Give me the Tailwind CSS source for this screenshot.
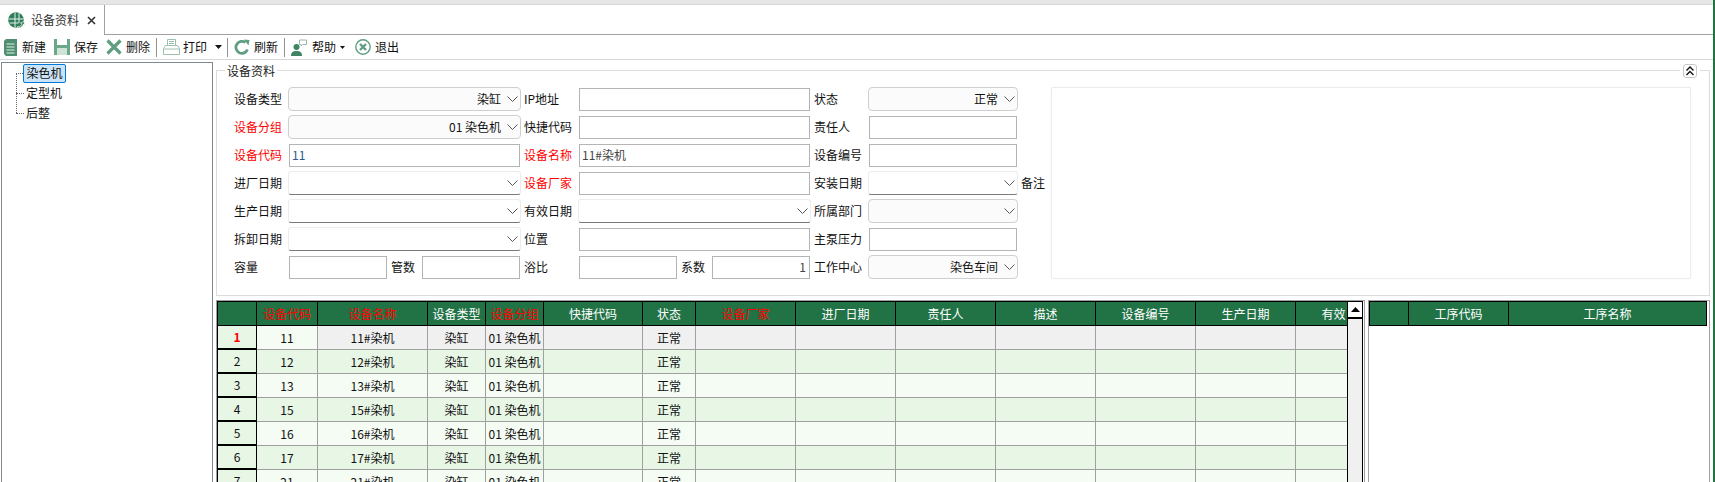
<!DOCTYPE html>
<html lang="zh-CN">
<head>
  <meta charset="UTF-8">
  <title>设备资料</title>
  <script src="https://cdn.jsdelivr.net/npm/@tailwindcss/browser@4"></script>
</head>
<body class="h-[482px] overflow-hidden bg-white text-[12px] leading-none text-[#111] font-['Noto_Sans_CJK_SC',sans-serif]">
<div class="relative h-[482px] w-[1715px] overflow-hidden">

  <!-- right window edge -->
  <div class="absolute right-0 top-0 h-full w-[2px] bg-[#217346]"></div>

  <!-- top strip -->
  <div class="h-[4px] bg-[#e6e6e6]"></div>

  <!-- tab bar -->
  <div class="flex h-[31px] border-t border-b border-t-[#d8d8d8] border-b-[#a0a0a0]">
    <div class="-mb-px flex w-[105px] items-center border-r border-[#a0a0a0] bg-white pl-[8px]">
      <svg class="h-[17px] w-[17px]" viewBox="0 0 17 17"><circle cx="8" cy="8" r="7.800" fill="#2f7d5b"/><path d="M.5 7h15M7 .5v15M11 1v10M1.500 11h9" stroke="#e4f2ea" fill="none"/><path d="M9 15.500c3 1 5.500-.5 6.500-3.500l1 1.500-.5-4-3.500 1.500 1.500.5c-.5 2-2 3.500-4.500 3z" fill="#2f7d5b" stroke="#fff" stroke-width=".6"/></svg>
      <span class="ml-[6px] text-[#333]">设备资料</span>
      <svg class="ml-[8px] h-[9px] w-[9px]" viewBox="0 0 9 9"><path d="M1 1l7 7M8 1l-7 7" stroke="#333" stroke-width="1.600"/></svg>
    </div>
  </div>

  <!-- toolbar -->
  <div class="flex h-[25px] items-center border-b border-[#d8d8d8] pl-[4px]">
    <svg class="h-[17px] w-[13px]" viewBox="0 0 13 17"><path d="M0 2l2-2h11v17H2l-2-2z" fill="#4f8f70"/><path d="M2.500 5h8M2.500 8h8M2.500 11h8M2.500 14h8" stroke="#dfeee6"/></svg>
    <span class="ml-[5px]">新建</span>
    <svg class="ml-[8px] h-[16px] w-[16px]" viewBox="0 0 16 16"><path d="M0 0h16v16H0z" fill="#6ca78a"/><path d="M3 0h10v6H3z" fill="#fff"/><path d="M3 9h10v7H3z" fill="#cfe3d8"/></svg>
    <span class="ml-[4px]">保存</span>
    <svg class="ml-[8px] h-[16px] w-[16px]" viewBox="0 0 16 16"><path d="M1.500 1.500l13 13M14.500 1.500l-13 13" stroke="#5f9e82" stroke-width="3.200"/></svg>
    <span class="ml-[4px]">删除</span>
    <div class="ml-[6px] h-[19px] w-px bg-[#909090]"></div>
    <svg class="ml-[6px] h-[16px] w-[17px]" viewBox="0 0 17 16" fill="none" stroke="#9cc0ae"><path d="M4.500.5h8v6h-8zM6 2.500h5M6 4.500h5"/><path d="M.5 9.500l2-3h12l2 3v6H.5z"/><path d="M1 10h15"/></svg>
    <span class="ml-[3px]">打印</span>
    <svg class="ml-[8px] h-[4px] w-[7px]" viewBox="0 0 7 4"><path d="M0 0h7L3.500 4z" fill="#111"/></svg>
    <div class="ml-[5px] h-[19px] w-px bg-[#909090]"></div>
    <svg class="ml-[6px] h-[16px] w-[16px]" viewBox="0 0 16 16" fill="none"><path d="M13.500 10.500A6 6 0 1 1 11.500 3.500" stroke="#5f9e82" stroke-width="2.800"/><path d="M10 .5l5.500 .5-1 5.500z" fill="#5f9e82"/></svg>
    <span class="ml-[4px]">刷新</span>
    <div class="ml-[6px] h-[19px] w-px bg-[#909090]"></div>
    <svg class="ml-[6px] h-[17px] w-[16px]" viewBox="0 0 16 17"><circle cx="5.500" cy="8" r="3" fill="#3f8564"/><path d="M0 17c0-4 2-5 5.500-5s5.500 1 5.500 5z" fill="#3f8564"/><path d="M8.500 1h7v4.500h-4l-1.500 1.500v-1.500h-1.500z" fill="#fff" stroke="#9ab8a9"/></svg>
    <span class="ml-[5px]">帮助</span>
    <svg class="ml-[4px] h-[3px] w-[5px]" viewBox="0 0 5 3"><path d="M0 0h5L2.500 3z" fill="#111"/></svg>
    <svg class="ml-[10px] h-[16px] w-[16px]" viewBox="0 0 16 16" fill="none" stroke="#5f9e82"><circle cx="8" cy="8" r="7.200" stroke-width="1.400"/><path d="M5 5l6 6M11 5l-6 6" stroke-width="2.400"/></svg>
    <span class="ml-[4px]">退出</span>
  </div>

  <div class="flex h-[422px]">
    <!-- tree -->
    <div class="mt-[2px] ml-px h-[420px] w-[212px] shrink-0 border-t border-r border-l border-[#80878f]">
      <div class="relative pl-[21px]">
        <div class="absolute left-[14px] top-[10px] h-[40px] border-l border-dotted border-[#666]"></div>
        <div class="flex h-[20px] items-center">
          <span class="flex h-[19px] w-[43px] items-center justify-center rounded-[2px] border border-[#0078d7] bg-[#cce4f7]">染色机</span>
        </div>
        <div class="flex h-[20px] items-center pl-[3px]">定型机</div>
        <div class="flex h-[20px] items-center pl-[3px]">后整</div>
        <div class="absolute left-[14px] top-[10px] w-[7px] border-t border-dotted border-[#666]"></div>
        <div class="absolute left-[14px] top-[30px] w-[8px] border-t border-dotted border-[#666]"></div>
        <div class="absolute left-[14px] top-[50px] w-[8px] border-t border-dotted border-[#666]"></div>
      </div>
    </div>

    <div class="ml-[3px] w-[1495px]">
      <!-- group box -->
      <div class="relative mt-[10px] h-[226px] w-[1494px] border border-[#dcdcdc] pl-[17px] pt-[16px]">
        <span class="absolute left-[8px] -top-[6px] bg-white px-[2px] text-[#222]">设备资料</span>
        <div class="absolute right-[9px] -top-[7px] bg-white px-[3px]">
          <div class="flex h-[14px] w-[14px] items-center justify-center rounded-[3px] border border-[#c8c8c8] bg-white">
            <svg class="h-[10px] w-[8px]" viewBox="0 0 8 10" fill="none" stroke="#111" stroke-width="1.400"><path d="M.5 4.500L4 1l3.500 3.500M.5 9L4 5.500 7.500 9"/></svg>
          </div>
        </div>
        <div class="grid grid-cols-[51px_231px_51px_231px_51px_148px_26px_640px] grid-rows-[repeat(7,24px)] items-center gap-x-[4px] gap-y-[4px]">
          <!-- row 1 -->
          <label>设备类型</label>
          <div class="-mx-px flex h-[24px] items-center justify-end rounded-[4px] border border-[#cfcfcf] bg-[#fbfbfb] pr-[2px]">染缸<svg class="ml-[6px] h-[6px] w-[11px]" viewBox="0 0 11 6" fill="none" stroke="#555"><path d="M.5.500L5.500 5.500 10.500.5"/></svg></div>
          <label>IP地址</label>
          <div class="h-[23px] border border-[#b4b4b4]"></div>
          <label>状态</label>
          <div class="-mx-px flex h-[24px] items-center justify-end rounded-[4px] border border-[#cfcfcf] bg-[#fbfbfb] pr-[2px]">正常<svg class="ml-[6px] h-[6px] w-[11px]" viewBox="0 0 11 6" fill="none" stroke="#555"><path d="M.5.500L5.500 5.500 10.500.5"/></svg></div>
          <span></span>
          <div class="col-start-8 row-span-7 row-start-1 h-[192px] rounded-[2px] border border-[#ececec] shadow-[0_0_1px_#ddd]"></div>

          <!-- row 2 -->
          <label class="text-[#f00]">设备分组</label>
          <div class="-mx-px flex h-[24px] items-center justify-end rounded-[4px] border border-[#cfcfcf] bg-[#fbfbfb] pr-[2px]">01 染色机<svg class="ml-[6px] h-[6px] w-[11px]" viewBox="0 0 11 6" fill="none" stroke="#555"><path d="M.5.500L5.500 5.500 10.500.5"/></svg></div>
          <label>快捷代码</label>
          <div class="h-[23px] border border-[#b4b4b4]"></div>
          <label>责任人</label>
          <div class="h-[23px] border border-[#b4b4b4]"></div>
          <span></span>

          <!-- row 3 -->
          <label class="text-[#f00]">设备代码</label>
          <div class="flex h-[23px] items-center border border-[#b4b4b4] pb-px pl-[2px] text-[#2b5a8c]">11</div>
          <label class="text-[#f00]">设备名称</label>
          <div class="flex h-[23px] items-center border border-[#b4b4b4] pb-px pl-[2px] text-[#444]">11#染机</div>
          <label>设备编号</label>
          <div class="h-[23px] border border-[#b4b4b4]"></div>
          <span></span>

          <!-- row 4 -->
          <label>进厂日期</label>
          <div class="-mx-px flex h-[24px] items-center justify-end rounded-[3px] border border-[#ececec] border-b-[#7a7a7a] pr-[2px]"><svg class="h-[6px] w-[11px]" viewBox="0 0 11 6" fill="none" stroke="#555"><path d="M.5.500L5.500 5.500 10.500.5"/></svg></div>
          <label class="text-[#f00]">设备厂家</label>
          <div class="h-[23px] border border-[#b4b4b4]"></div>
          <label>安装日期</label>
          <div class="-mx-px flex h-[24px] items-center justify-end rounded-[3px] border border-[#ececec] border-b-[#7a7a7a] pr-[2px]"><svg class="h-[6px] w-[11px]" viewBox="0 0 11 6" fill="none" stroke="#555"><path d="M.5.500L5.500 5.500 10.500.5"/></svg></div>
          <label class="whitespace-nowrap">备注</label>

          <!-- row 5 -->
          <label>生产日期</label>
          <div class="-mx-px flex h-[24px] items-center justify-end rounded-[3px] border border-[#ececec] border-b-[#7a7a7a] pr-[2px]"><svg class="h-[6px] w-[11px]" viewBox="0 0 11 6" fill="none" stroke="#555"><path d="M.5.500L5.500 5.500 10.500.5"/></svg></div>
          <label>有效日期</label>
          <div class="-mx-px flex h-[24px] items-center justify-end rounded-[3px] border border-[#ececec] border-b-[#7a7a7a] pr-[2px]"><svg class="h-[6px] w-[11px]" viewBox="0 0 11 6" fill="none" stroke="#555"><path d="M.5.500L5.500 5.500 10.500.5"/></svg></div>
          <label>所属部门</label>
          <div class="-mx-px flex h-[24px] items-center justify-end rounded-[4px] border border-[#cfcfcf] bg-[#fbfbfb] pr-[2px]"><svg class="h-[6px] w-[11px]" viewBox="0 0 11 6" fill="none" stroke="#555"><path d="M.5.500L5.500 5.500 10.500.5"/></svg></div>
          <span></span>

          <!-- row 6 -->
          <label>拆卸日期</label>
          <div class="-mx-px flex h-[24px] items-center justify-end rounded-[3px] border border-[#ececec] border-b-[#7a7a7a] pr-[2px]"><svg class="h-[6px] w-[11px]" viewBox="0 0 11 6" fill="none" stroke="#555"><path d="M.5.500L5.500 5.500 10.500.5"/></svg></div>
          <label>位置</label>
          <div class="h-[23px] border border-[#b4b4b4]"></div>
          <label>主泵压力</label>
          <div class="h-[23px] border border-[#b4b4b4]"></div>
          <span></span>

          <!-- row 7 -->
          <label>容量</label>
          <div class="flex items-center gap-x-[4px]">
            <div class="h-[23px] w-[98px] border border-[#b4b4b4]"></div>
            <span class="w-[27px]">管数</span>
            <div class="h-[23px] w-[98px] border border-[#b4b4b4]"></div>
          </div>
          <label>浴比</label>
          <div class="flex items-center gap-x-[4px]">
            <div class="h-[23px] w-[98px] border border-[#b4b4b4]"></div>
            <span class="w-[27px]">系数</span>
            <div class="flex h-[23px] w-[98px] items-center justify-end border border-[#b4b4b4] pr-[3px] text-[#444]">1</div>
          </div>
          <label>工作中心</label>
          <div class="-mx-px flex h-[24px] items-center justify-end rounded-[4px] border border-[#cfcfcf] bg-[#fbfbfb] pr-[2px]">染色车间<svg class="ml-[6px] h-[6px] w-[11px]" viewBox="0 0 11 6" fill="none" stroke="#555"><path d="M.5.500L5.500 5.500 10.500.5"/></svg></div>
        </div>
      </div>

      <!-- grids -->
      <div class="mt-[4px] flex gap-[3px]">
        <div class="flex h-[182px] w-[1149px] overflow-hidden border-t border-r border-l border-[#a0a0a0]">
          <div class="w-[1130px] shrink-0 overflow-hidden">
            <table class="w-[1179px] table-fixed border-separate border-spacing-0 text-center">
              <colgroup>
                <col class="w-[40px]"><col class="w-[61px]"><col class="w-[110px]"><col class="w-[58px]"><col class="w-[58px]"><col class="w-[99px]"><col class="w-[53px]"><col class="w-[100px]"><col class="w-[100px]"><col class="w-[100px]"><col class="w-[100px]"><col class="w-[100px]"><col class="w-[100px]"><col class="w-[100px]">
              </colgroup>
              <thead id="head"></thead>
              <tbody id="rows"></tbody>
            </table>
          </div>
          <!-- scrollbar -->
          <div class="h-full w-[16px] shrink-0 border-x border-black bg-[#f0f0f0]">
            <div class="flex h-[18px] items-center justify-center border-t border-b-2 border-black bg-white">
              <svg class="h-[5px] w-[9px]" viewBox="0 0 9 5"><path d="M4.500 0l4.500 5H0z" fill="#000"/></svg>
            </div>
          </div>
        </div>

        <div class="h-[182px] w-[342px] border-t border-r border-l border-[#a0a0a0] pr-[3px]">
          <table class="w-[338px] table-fixed border-separate border-spacing-0 text-center">
            <colgroup><col class="w-[40px]"><col class="w-[100px]"><col class="w-[198px]"></colgroup>
            <thead>
              <tr class="h-[25px] bg-[#217346] text-white">
                <th class="border-y border-r border-l border-black font-normal"></th>
                <th class="border-y border-r border-black font-normal">工序代码</th>
                <th class="border-y border-r border-black font-normal">工序名称</th>
              </tr>
            </thead>
          </table>
        </div>
      </div>
    </div>
  </div>
</div>

<script>
  // grid content
  const headers = [
    ['', 0], ['设备代码', 1], ['设备名称', 1], ['设备类型', 0], ['设备分组', 1], ['快捷代码', 0], ['状态', 0],
    ['设备厂家', 1], ['进厂日期', 0], ['责任人', 0], ['描述', 0], ['设备编号', 0], ['生产日期', 0], ['有效日期', 0]
  ];
  document.getElementById('head').innerHTML = '<tr class="h-[25px] bg-[#217346] text-white">' + headers.map((h, i) =>
    `<th class="overflow-hidden border-y border-r border-black font-normal whitespace-nowrap ${i === 0 ? 'border-l' : ''} ${h[1] ? 'text-[#f00]' : ''}">${h[0]}</th>`
  ).join('') + '</tr>';

  const codes = [11, 12, 13, 15, 16, 17, 21];
  document.getElementById('rows').innerHTML = codes.map((code, i) => {
    const bg = i === 0 ? 'bg-[#f0f0f0]' : (i % 2 ? 'bg-[#e8f6e6]' : 'bg-[#f4fcf4]');
    const cell = `border-r border-b border-[#a0a0a0] ${bg}`;
    const blanks = Array(7).fill(`<td class="${cell}"></td>`).join('');
    return `<tr class="h-[24px]">
      <td class="border-r border-b-2 border-l border-black bg-[#e8f6e6] ${i === 0 ? 'font-bold text-[#f00]' : ''}">${i + 1}</td>
      <td class="border-r border-b border-[#a0a0a0] ${i === 0 ? 'bg-[#f4fcf4]' : bg}">${code}</td>
      <td class="${cell}">${code}#染机</td>
      <td class="${cell}">染缸</td>
      <td class="${cell} whitespace-nowrap">01 染色机</td>
      <td class="${cell}"></td>
      <td class="${cell}">正常</td>
      ${blanks}
    </tr>`;
  }).join('');
</script>
</body>
</html>
